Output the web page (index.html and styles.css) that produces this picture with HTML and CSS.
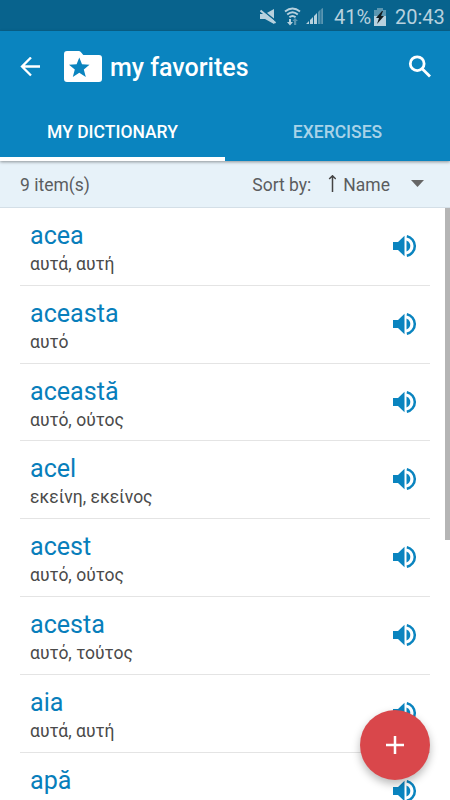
FILE: index.html
```html
<!DOCTYPE html>
<html lang="en">
<head>
<meta charset="utf-8">
<title>my favorites</title>
<link rel="stylesheet" href="styles.css">
</head>
<body>
<svg class="defs" width="0" height="0" aria-hidden="true">
  <symbol id="speaker" viewBox="0 0 24 22">
    <path d="M0 7H5L11.5 .8V21.2L5 15H0Z"/>
    <path d="M13.5 5.6Q17.3 7.4 17.3 11T13.5 16.4Z"/>
    <path d="M13.8 1.2A10 10 0 0 1 13.8 20.8" fill="none" stroke="currentColor" stroke-width="2.5"/>
  </symbol>
</svg>
<div class="screen">
  <div class="status">
    <svg class="mute" width="17" height="18" viewBox="0 0 17 18"><path d="M0 6H5L14 1V16L5 11H0Z"/><path d="M1 1.2L16 13.2" stroke="#08638d" stroke-width="1.6"/><path d="M.5 2.5L15.5 15" stroke="#b7d1de" stroke-width="2"/></svg>
    <svg class="wifi" width="17" height="19" viewBox="0 0 17 19"><g fill="none" stroke="#b7d1de" stroke-width="1.9"><path d="M1 4.6Q8.5-1.4 16 4.6M3.2 7.5Q8.5 3 13.8 7.5M5.4 10.2Q8.5 7.6 11.6 10.2"/></g><path d="M5 12H7V15H9L6 18.5L3 15H5Z"/><path class="dim" d="M10 18V14H8.3L11 11L14 14H12.2V18Z"/></svg>
    <svg class="signal" width="17" height="17" viewBox="0 0 17 17"><path d="M0 16L3 13V16ZM4 12L7 9V16H4ZM8 8L11 5V16H8Z"/><path class="dim" d="M12 4L14.5 1.5V16H12ZM15.2 1L17 0V16H15.2Z"/></svg>
    <span class="percent">41%</span>
    <svg class="battery" width="12" height="18" viewBox="0 0 12 18"><path class="dim" d="M3 0H9V2H12V8H0V2H3Z"/><path d="M0 8H12V18H0Z"/><path d="M8 3L2 10H5L3 16L10 8H7L9 3Z" fill="#101b20"/></svg>
    <span class="clock">20:43</span>
  </div>
  <header class="header">
    <div class="bar">
      <svg class="back" width="20" height="20" viewBox="0 0 20 20"><path d="M20 9.5H2M11 .5L2 9.5L11 18.5"/></svg>
      <svg class="folder" width="38" height="31" viewBox="0 0 38 31"><path d="M3 0H14.5Q16 0 17 1.3L19.3 4H35Q38 4 38 7V28Q38 31 35 31H3Q0 31 0 28V3Q0 0 3 0Z" fill="#fff"/><path d="M15.3 6.5L18 13.3L25.5 13.8L19.8 18.4L21.8 26L15.3 21.8L8.8 26L10.8 18.4L5 13.8L12.6 13.3Z" fill="#0a84bf"/></svg>
      <h1>my favorites</h1>
      <svg class="search" width="24" height="24" viewBox="0 0 24 24"><circle cx="9.2" cy="8.7" r="6.9"/><path d="M14.2 13.7L22 21.5"/></svg>
    </div>
    <nav class="tabs"><span class="tab active">MY DICTIONARY</span><span class="tab">EXERCISES</span></nav>
  </header>
  <div class="sort">
    <span class="count">9 item(s)</span><span class="label">Sort by:</span>
    <svg class="arrow" width="8" height="18" viewBox="0 0 8 18"><path d="M4.5 17V1M1.2 4L4.5 .8L7.8 4"/></svg>
    <span class="name">Name</span>
    <svg class="caret" width="13" height="8" viewBox="0 0 13 8"><path d="M0 0H13L6.5 7Z"/></svg>
  </div>
  <main class="list">
    <div class="row"><div><h2>acea</h2><p>αυτά, αυτή</p></div><svg class="sound"><use href="#speaker"/></svg></div>
    <div class="row"><div><h2>aceasta</h2><p>αυτό</p></div><svg class="sound"><use href="#speaker"/></svg></div>
    <div class="row"><div><h2>această</h2><p>αυτό, ούτος</p></div><svg class="sound"><use href="#speaker"/></svg></div>
    <div class="row"><div><h2>acel</h2><p>εκείνη, εκείνος</p></div><svg class="sound"><use href="#speaker"/></svg></div>
    <div class="row"><div><h2>acest</h2><p>αυτό, ούτος</p></div><svg class="sound"><use href="#speaker"/></svg></div>
    <div class="row"><div><h2>acesta</h2><p>αυτό, τούτος</p></div><svg class="sound"><use href="#speaker"/></svg></div>
    <div class="row"><div><h2>aia</h2><p>αυτά, αυτή</p></div><svg class="sound"><use href="#speaker"/></svg></div>
    <div class="row"><div><h2>apă</h2></div><svg class="sound"><use href="#speaker"/></svg></div>
    <div class="scrollbar"></div>
  </main>
  <button class="fab" aria-label="Add"><svg width="18" height="18" viewBox="0 0 18 18"><path d="M9 0V18M0 9H18"/></svg></button>
</div>
</body>
</html>
```
FILE: styles.css
```css
* { box-sizing: border-box; }
body { margin: 0; font-family: Roboto, "Noto Sans", sans-serif; background: #fff; }
h1, h2, p { margin: 0; font-weight: 400; white-space: nowrap; }
svg { display: block; flex: none; }
.defs { position: absolute; }
.screen { position: relative; width: 450px; height: 800px; overflow: hidden; display: flex; flex-direction: column; }
.status { height: 31px; flex: none; background: #08638d; color: #b7d1de; display: flex; align-items: center; padding-left: 260px; padding-top: 2px; font-size: 20px; white-space: nowrap; }
.status svg { fill: #b7d1de; }
.status .dim { fill: #5a96b1; }
.wifi { margin-left: 7px; }
.signal { margin-left: 5px; }
.percent { width: 38px; margin-left: 11px; }
.battery { margin-left: 2px; }
.clock { margin-left: 9px; }
.header { height: 130px; flex: none; background: #0a84bf; color: #fff; position: relative; z-index: 1; box-shadow: 0 1px 3px rgba(0,0,0,.4); }
.bar { height: 72px; display: flex; align-items: center; padding: 0 18px 0 20px; }
.back, .search { fill: none; stroke: #fff; stroke-width: 2.3; }
.folder { margin-left: 24px; margin-top: -2px; }
.bar h1 { margin-left: 8px; font-size: 25px; font-weight: 500; line-height: 30px; padding-top: 2px; }
.search { margin-left: auto; stroke-width: 2.8; }
.tabs { display: flex; height: 58px; }
.tab { flex: 1; text-align: center; font-size: 17.5px; font-weight: 500; line-height: 58px; color: #a9d3e8; border-bottom: 4px solid transparent; }
.tab.active { color: #fff; border-color: #fff; }
.sort { height: 47px; flex: none; background: #e7f2f9; border-bottom: 1px solid #d4dfe7; display: flex; align-items: center; padding: 1px 26px 0 20px; font-size: 17.5px; color: #5b5d5f; }
.label { margin-left: auto; }
.arrow { margin-left: 17px; margin-top: -2px; fill: none; stroke: #444; stroke-width: 1.5; }
.name { margin-left: 7px; }
.caret { margin-left: 21px; margin-top: -2px; fill: #666; }
.list { position: relative; flex: 1; min-height: 0; overflow: hidden; padding: 0 20px; }
.row { height: 77.8px; border-bottom: 1px solid #e4e4e4; padding: 12px 13px 0 10px; display: flex; justify-content: space-between; }
.row h2 { font-size: 25.1px; line-height: 32px; color: #087ebb; }
.row p { font-size: 17.5px; line-height: 24px; color: #4a4a4a; }
.sound { width: 24px; height: 22px; margin-top: 15px; color: #0a84bf; fill: #0a84bf; }
.scrollbar { position: absolute; top: 0; right: 0; width: 5px; height: 332px; background: #b5b5b5; }
.fab { position: absolute; right: 20px; bottom: 20px; width: 70px; height: 70px; border: 0; border-radius: 50%; background: #d9474b; padding: 0; display: grid; place-items: center; box-shadow: 0 4px 8px rgba(0,0,0,.28); }
.fab svg { stroke: #fff; stroke-width: 2.5; }
```
